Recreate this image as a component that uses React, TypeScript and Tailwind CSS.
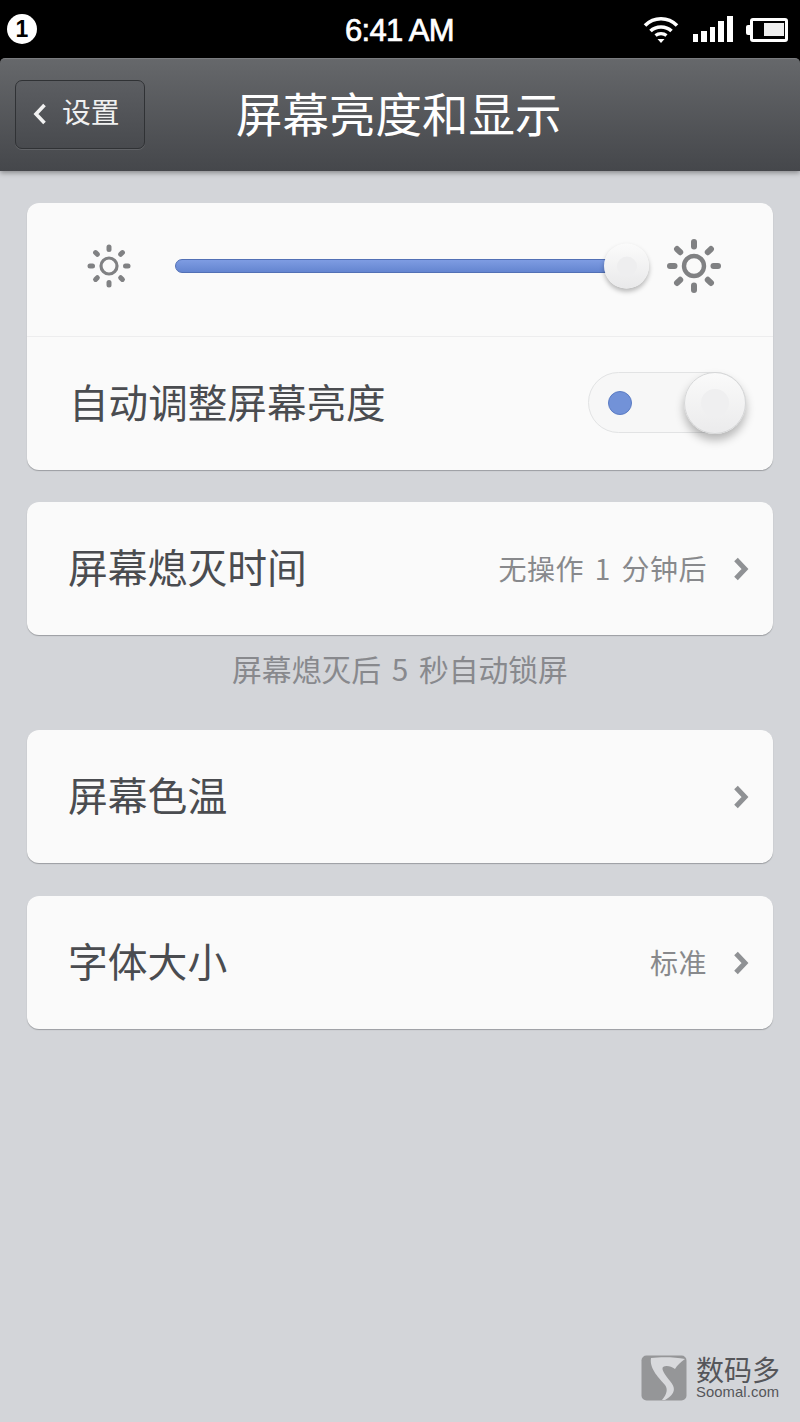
import { Fragment } from 'react';

const cjk = { fontFamily: '"Noto Sans CJK SC", "Noto Sans", sans-serif' };

function Sun({ size, ring, stroke, from, to, ray }: { size: number; ring: number; stroke: number; from: number; to: number; ray: number }) {
  const c = size / 2;
  return (
    <svg width={size} height={size} viewBox={`0 0 ${size} ${size}`} className="shrink-0">
      <circle cx={c} cy={c} r={ring} fill="none" stroke="#808183" strokeWidth={stroke} />
      {[0, 45, 90, 135, 180, 225, 270, 315].map((a) => (
        <line
          key={a}
          x1={c}
          y1={c - from}
          x2={c}
          y2={c - to}
          stroke="#808183"
          strokeWidth={ray}
          strokeLinecap="round"
          transform={`rotate(${a} ${c} ${c})`}
        />
      ))}
    </svg>
  );
}

function Chevron() {
  return (
    <svg width="16" height="24" viewBox="0 0 16 24" className="shrink-0">
      <path d="M3 2.5 L12 12 L3 21.5" fill="none" stroke="#8f9194" strokeWidth="5" />
    </svg>
  );
}

function Row({ label, value }: { label: string; value?: string }) {
  return (
    <div className="h-[133px] rounded-[12px] bg-[#fafafa] shadow-[0_1px_1px_#9b9da1] flex items-center pl-[41px] pr-[24px]">
      <span className="mb-[6px] text-[39.8px] leading-none text-[#4a4c50]">{label}</span>
      {value && <span className="ml-auto mb-[1px] text-[28px] leading-none text-[#88898c] tracking-[0.5px] [word-spacing:4px]">{value}</span>}
      <span className={`${value ? 'ml-[26px]' : 'ml-auto'} flex`}>
        <Chevron />
      </span>
    </div>
  );
}

function StatusBar() {
  return (
    <div className="relative h-[58px] bg-black flex items-center shrink-0">
      <span
        className="ml-[7px] w-[30px] h-[30px] rounded-full bg-white text-black flex items-center justify-center text-[23px] font-bold leading-none"
        style={{ fontFamily: '"Liberation Sans", sans-serif' }}
      >
        1
      </span>
      <span
        className="absolute left-[345px] top-[14px] text-[31px] leading-[34px] font-normal text-white tracking-[-0.7px] [-webkit-text-stroke:0.7px_white]"
        style={{ fontFamily: '"Liberation Sans", sans-serif' }}
      >
        6:41 AM
      </span>
      <div className="ml-auto mr-[12px] flex items-center">
        <svg width="36" height="28" viewBox="0 0 36 28" className="mr-[14px] mt-[-1px]">
          <path d="M2 10.5 C11 1.5 25 1.5 34 10.5" fill="none" stroke="#fff" strokeWidth="3.6" />
          <path d="M7.5 16 C13 10.6 23 10.6 28.5 16" fill="none" stroke="#fff" strokeWidth="3.6" />
          <path d="M12.5 20.5 C15.5 18 20.5 18 23.5 20.5" fill="none" stroke="#fff" strokeWidth="3.2" />
          <path d="M14.5 24 L21.5 24 L18 28 Z" fill="#fff" />
        </svg>
        <div className="flex items-end gap-[3px] h-[26px] mr-[13px]">
          <i className="block w-[5.5px] h-[8px] bg-white" />
          <i className="block w-[5.5px] h-[11px] bg-white" />
          <i className="block w-[5.5px] h-[15px] bg-white" />
          <i className="block w-[6px] h-[21px] bg-white" />
          <i className="block w-[6px] h-[26px] bg-white" />
        </div>
        <div className="flex items-center mt-[1px]">
          <i className="block w-[4px] h-[10px] bg-white rounded-l-[2px]" />
          <div className="w-[38px] h-[24px] border-[3px] border-white rounded-[3px] flex justify-end items-center pr-[1px]">
            <i className="block w-[20px] h-[13px] bg-[#eeeeee]" />
          </div>
        </div>
      </div>
    </div>
  );
}

function Header() {
  return (
    <div className="relative h-[113px] shrink-0 bg-black">
      <div className="h-full rounded-t-[5px] bg-gradient-to-b from-[#66686b] to-[#45474b] border-t border-[#7a7c7f] shadow-[0_2px_5px_rgba(0,0,0,0.35)] flex items-center pl-[15px]">
        <div className="w-[130px] h-[69px] mt-[-2px] rounded-[7px] border-[1.5px] border-[#303235] bg-gradient-to-b from-[#5c5e62] to-[#484a4e] shadow-[0_1px_0_rgba(255,255,255,0.12)] flex items-center pl-[16px]">
          <svg width="16" height="24" viewBox="0 0 16 24" className="shrink-0">
            <path d="M12.5 3 L4 12 L12.5 21" fill="none" stroke="#f2f2f2" strokeWidth="3.6" />
          </svg>
          <span className="ml-[14px] mb-[5px] text-[28.8px] leading-none text-[#f0f0f0]">设置</span>
        </div>
        <span className="ml-[91px] mb-[6px] text-[46.5px] leading-none text-white whitespace-nowrap">屏幕亮度和显示</span>
      </div>
    </div>
  );
}

function BrightnessCard() {
  return (
    <div className="rounded-[12px] bg-[#fafafa] shadow-[0_1px_1px_#9b9da1]">
      <div className="h-[134px] flex items-center border-b border-[#ededee] pb-[7px] pl-[59px] pr-[51px]">
        <Sun size={46} ring={8} stroke={3.2} from={16.5} to={19} ray={5} />
        <div className="relative flex-1 ml-[43px] mr-[38px] h-[14px] rounded-full bg-gradient-to-b from-[#7e9ce2] to-[#6485d0] border border-[#5270b5]">
          <span className="absolute right-[-22px] top-1/2 -translate-y-1/2 w-[45px] h-[45px] rounded-full bg-gradient-to-b from-[#fbfbfb] to-[#e9e9ea] shadow-[0_3px_5px_rgba(0,0,0,0.28)] flex items-center justify-center">
            <i className="block w-[20px] h-[20px] rounded-full bg-[#eeeeef]" />
          </span>
        </div>
        <Sun size={56} ring={10} stroke={4.4} from={19.5} to={24} ray={6} />
      </div>
      <div className="h-[133px] flex items-center pl-[42px] pr-[27px]">
        <span className="mb-[5px] text-[39.6px] leading-none text-[#4a4c50]">自动调整屏幕亮度</span>
        <div className="relative ml-auto mb-[2px] w-[158px] h-[61px] rounded-full bg-[#f7f7f7] border border-[#e2e3e4] flex items-center pl-[19px]">
          <span className="w-[24px] h-[24px] rounded-full bg-[#7292d8] border border-[#5b7cc4]" />
          <span className="absolute right-[-1px] top-[-1px] w-[62px] h-[62px] rounded-full bg-gradient-to-b from-[#fafafa] to-[#ebebec] border border-[#d6d7d8] shadow-[0_6px_10px_rgba(0,0,0,0.28)] flex items-center justify-center">
            <i className="block w-[28px] h-[28px] rounded-full bg-[#efeff0]" />
          </span>
        </div>
      </div>
    </div>
  );
}

function Watermark() {
  return (
    <div className="mt-auto mb-[21px] mr-[20px] self-end flex items-start">
      <svg width="46" height="46" viewBox="0 0 46 46" className="mt-[1px] shrink-0">
        <rect x="0.5" y="0.5" width="45" height="45" rx="5" fill="#959698" />
        <path
          d="M10 3 C20 2 34 2 44 4 C40 7 36 10 34 14 C30 11 25 10 22 12 C20 14 24 20 29 26 C34 32 36 38 24 45 L21 45 C26 39 27 34 24 30 C19 24 8 14 10 3 Z"
          fill="#d8d9dc"
        />
      </svg>
      <div className="ml-[9px] flex flex-col items-start">
        <span className="text-[28px] leading-[30px] text-[#55565a]">数码多</span>
        <span
          className="text-[14.8px] leading-[16px] text-[#55565a] tracking-[0.1px]"
          style={{ fontFamily: '"Liberation Sans", sans-serif' }}
        >
          Soomal.com
        </span>
      </div>
    </div>
  );
}

export default function App() {
  return (
    <Fragment>
      <div className="w-[800px] h-[1422px] overflow-hidden bg-[#d3d5d9] flex flex-col" style={cjk}>
        <StatusBar />
        <Header />
        <main className="flex-1 flex flex-col">
          <div className="px-[27px] pt-[32px]">
            <BrightnessCard />
            <div className="mt-[32px]">
              <Row label="屏幕熄灭时间" value="无操作 1 分钟后" />
            </div>
            <p className="mt-[16px] h-[34px] text-center text-[29.8px] leading-[34px] text-[#88898d] [word-spacing:4px]">屏幕熄灭后 5 秒自动锁屏</p>
            <div className="mt-[45px]">
              <Row label="屏幕色温" />
            </div>
            <div className="mt-[33px]">
              <Row label="字体大小" value="标准" />
            </div>
          </div>
          <Watermark />
        </main>
      </div>
    </Fragment>
  );
}
